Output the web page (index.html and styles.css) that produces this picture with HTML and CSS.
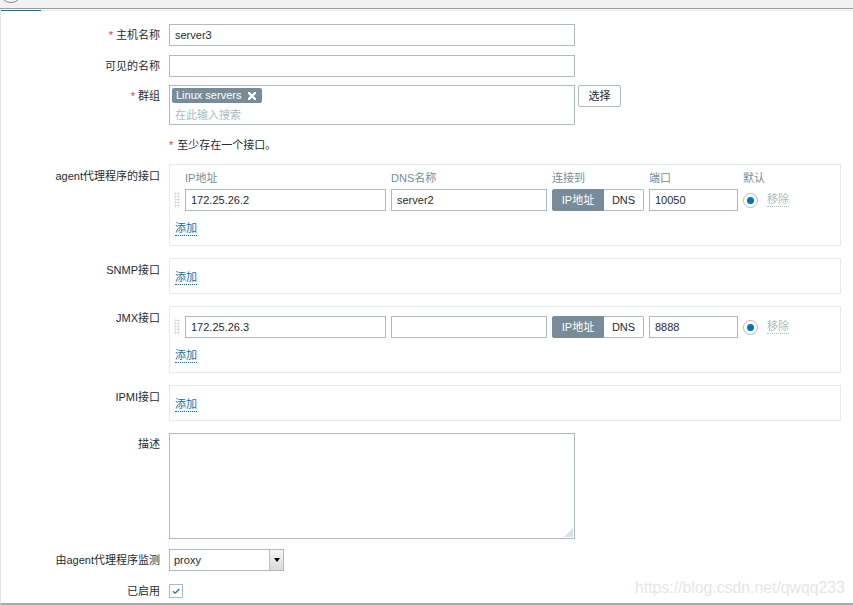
FILE: index.html
```html
<!DOCTYPE html>
<html lang="zh-CN">
<head>
<meta charset="utf-8">
<title>主机</title>
<link rel="stylesheet" href="styles.css">
</head>
<body>
<div class="topbar"><div class="avatar"></div></div>
<div class="page">
  <div class="tabs"><div class="tab-active"></div><div class="tab-rest"></div></div>
  <form class="form">
    <div class="row">
      <label class="lbl"><span class="req">*</span>主机名称</label>
      <div class="field"><input class="input" type="text" value="server3"></div>
    </div>
    <div class="row mb8">
      <label class="lbl">可见的名称</label>
      <div class="field"><input class="input" type="text" value=""></div>
    </div>
    <div class="row mb10">
      <label class="lbl"><span class="req">*</span>群组</label>
      <div class="field ms-row">
        <div class="ms">
          <span class="chip">Linux servers<svg viewBox="0 0 8 8"><path d="M1 1L7 7M7 1L1 7" stroke="#fff" stroke-width="2.3" stroke-linecap="square"/></svg></span>
          <div class="ms-ph">在此输入搜索</div>
        </div>
        <button type="button" class="btn">选择</button>
      </div>
    </div>
    <div class="row mb11">
      <div class="lbl"></div>
      <div class="field msg"><span class="req">*</span>至少存在一个接口。</div>
    </div>

    <div class="row mb12">
      <label class="lbl lbl-box">agent代理程序的接口</label>
      <div class="field">
        <div class="iface">
          <div class="if-grid if-head">
            <span></span><span>IP地址</span><span>DNS名称</span><span>连接到</span><span>端口</span><span>默认</span>
          </div>
          <div class="if-grid if-row">
            <span class="handle"></span>
            <input class="input fill" type="text" value="172.25.26.2">
            <input class="input fill" type="text" value="server2">
            <div class="toggle"><span class="tg-on">IP地址</span><span class="tg-off">DNS</span></div>
            <input class="input fill" type="text" value="10050">
            <div class="def"><span class="radio"></span><span class="rm">移除</span></div>
          </div>
          <div class="add-line"><a class="add">添加</a></div>
        </div>
      </div>
    </div>

    <div class="row mb12">
      <label class="lbl lbl-box">SNMP接口</label>
      <div class="field">
        <div class="iface empty">
          <div class="add-line"><a class="add">添加</a></div>
        </div>
      </div>
    </div>

    <div class="row mb12">
      <label class="lbl lbl-box">JMX接口</label>
      <div class="field">
        <div class="iface no-head">
          <div class="if-grid if-row">
            <span class="handle"></span>
            <input class="input fill" type="text" value="172.25.26.3">
            <input class="input fill" type="text" value="">
            <div class="toggle"><span class="tg-on">IP地址</span><span class="tg-off">DNS</span></div>
            <input class="input fill" type="text" value="8888">
            <div class="def"><span class="radio"></span><span class="rm">移除</span></div>
          </div>
          <div class="add-line"><a class="add">添加</a></div>
        </div>
      </div>
    </div>

    <div class="row mb12">
      <label class="lbl lbl-box">IPMI接口</label>
      <div class="field">
        <div class="iface empty">
          <div class="add-line"><a class="add">添加</a></div>
        </div>
      </div>
    </div>

    <div class="row mb10">
      <label class="lbl">描述</label>
      <div class="field"><div class="ta-wrap"><textarea class="textarea"></textarea></div></div>
    </div>

    <div class="row">
      <label class="lbl">由agent代理程序监测</label>
      <div class="field">
        <div class="select"><span class="select-val">proxy</span><span class="select-arrow"><span class="tri"></span></span></div>
      </div>
    </div>

    <div class="row">
      <label class="lbl">已启用</label>
      <div class="field">
        <span class="checkbox"><svg viewBox="0 0 12 12"><path d="M3 6.2L5.2 8.2L9.3 4" fill="none" stroke="#0275b8" stroke-width="1.2"/></svg></span>
      </div>
    </div>
  </form>
  <div class="watermark">https://blog.csdn.net/qwqq233</div>
</div>
</body>
</html>
```
FILE: styles.css
```css
* { box-sizing: border-box; }
html, body { margin: 0; height: 605px; overflow: hidden; }
body {
  font: 11px/18px "Liberation Sans", "Noto Sans CJK SC", sans-serif;
  color: #1f2c33;
  background: #fff;
}

.topbar {
  height: 9px;
  background: #f2f2f2;
  border-bottom: 1px solid #9c9c9c;
  overflow: hidden;
}
.avatar {
  width: 24px;
  height: 24px;
  margin: -21px 0 0 -1px;
  border: 1px solid #8a8a8a;
  border-radius: 50%;
  background: #f7f7f7;
}

.page {
  position: relative;
  height: 596px;
  border-left: 1px solid #dfe4e7;
  border-bottom: 2px solid #a8a8a8;
}

.tabs { display: flex; padding-top: 1px; }
.tab-active { width: 40px; height: 1px; background: #0275b8; }
.tab-rest { flex: 1; height: 1px; background: #e8e8e8; }

.form { padding-top: 13px; }

.row {
  display: grid;
  grid-template-columns: 159px 1fr;
  column-gap: 9px;
  margin-bottom: 9px;
}
.mb8 { margin-bottom: 8px; }
.mb10 { margin-bottom: 10px; }
.mb11 { margin-bottom: 11px; }
.mb12 { margin-bottom: 12px; }

.lbl {
  text-align: right;
  padding-top: 2px;
  line-height: 18px;
  white-space: nowrap;
}
.lbl-box { padding-top: 3px; }
.req { color: #e33734; margin-right: 3px; }

.input {
  display: block;
  width: 406px;
  height: 22px;
  margin: 0;
  padding: 0 5px;
  border: 1px solid #acbbc2;
  border-radius: 0;
  background: #fff;
  font: inherit;
  color: #1f2c33;
  outline: none;
}
.input.fill { width: 100%; }

.ms-row { display: flex; align-items: flex-start; gap: 3px; }
.ms {
  width: 406px;
  height: 40px;
  border: 1px solid #acbbc2;
  padding: 2px;
}
.chip {
  display: inline-flex;
  align-items: center;
  gap: 7px;
  height: 15px;
  padding: 0 6px 0 4px;
  border-radius: 2px;
  background: #768d99;
  color: #fff;
  line-height: 15px;
  vertical-align: top;
}
.chip svg { width: 8px; height: 8px; display: block; }
.ms-ph { color: #acbbc2; padding-left: 3px; margin-top: 0; line-height: 18px; }

.btn {
  width: 43px;
  height: 22px;
  padding: 0;
  border: 1px solid #acbbc2;
  border-radius: 2px;
  background: #fff;
  font: inherit;
  color: #1f2c33;
}

.msg { line-height: 18px; height: 18px; padding-top: 1px; }
.msg .req { margin-right: 4px; }

.iface {
  width: 672px;
  border: 1px solid #e6eaec;
  padding: 4px 4px 8px;
}
.iface.no-head { padding-top: 9px; }
.iface.empty { padding: 9px 4px 7px; }

.if-grid {
  display: grid;
  grid-template-columns: 6px 201px 156px 92px 89px auto;
  column-gap: 5px;
}
.if-head { color: #768d99; line-height: 18px; margin-bottom: 2px; }
.if-row { height: 22px; margin-bottom: 8px; align-items: start; }

.handle {
  width: 6px;
  height: 16px;
  margin-top: 3px;
  background: radial-gradient(circle, #d5dce0 45%, transparent 55%) 0 0 / 3px 3px;
}

.toggle { display: flex; height: 22px; }
.toggle span { display: flex; align-items: center; justify-content: center; }
.tg-on {
  width: 52px;
  background: #768d99;
  color: #fff;
  border: 1px solid #768d99;
  border-radius: 2px 0 0 2px;
}
.tg-off {
  width: 40px;
  border: 1px solid #acbbc2;
  border-left: 0;
  border-radius: 0 2px 2px 0;
}

.def { display: flex; align-items: center; gap: 9px; height: 22px; }
.radio {
  width: 15px;
  height: 15px;
  border: 1px solid #acbbc2;
  border-radius: 50%;
  display: flex;
  align-items: center;
  justify-content: center;
}
.radio::after {
  content: "";
  width: 7px;
  height: 7px;
  border-radius: 50%;
  background: #0275b8;
}
.rm {
  color: #acbbc2;
  line-height: 13px;
  border-bottom: 1px dotted #acbbc2;
}

.add-line { height: 18px; display: flex; align-items: center; }
.add {
  margin-left: 1px;
  color: #0275b8;
  line-height: 14px;
  border-bottom: 1px dotted #0275b8;
  cursor: pointer;
}

.ta-wrap { position: relative; width: 406px; height: 106px; }
.ta-wrap::after {
  content: "";
  position: absolute;
  right: 2px;
  bottom: 2px;
  width: 9px;
  height: 9px;
  background: radial-gradient(circle, #b9c4ca 45%, transparent 55%) 0 0 / 2px 2px;
  clip-path: polygon(100% 0, 100% 100%, 0 100%);
  pointer-events: none;
}
.textarea {
  display: block;
  width: 406px;
  height: 106px;
  margin: 0;
  border: 1px solid #acbbc2;
  border-radius: 0;
  font: inherit;
  outline: none;
  resize: none;
}

.select {
  display: flex;
  width: 115px;
  height: 22px;
  border: 1px solid #acbbc2;
  background: #fff;
}
.select-val { flex: 1; padding-left: 4px; line-height: 20px; }
.select-arrow {
  width: 14px;
  display: flex;
  align-items: center;
  justify-content: center;
  background: linear-gradient(#f6f6f6, #dadada);
  border-left: 1px solid #bdbdbd;
}
.tri {
  width: 0;
  height: 0;
  border-left: 3px solid transparent;
  border-right: 3px solid transparent;
  border-top: 4px solid #000;
}

.checkbox {
  display: block;
  width: 14px;
  height: 14px;
  margin-top: 4px;
  border: 1px solid #acbbc2;
  background: #fff;
}
.checkbox svg { display: block; width: 12px; height: 12px; }

.watermark {
  position: absolute;
  left: 634px;
  top: 569px;
  font: 15.8px/20px "Liberation Sans", sans-serif;
  color: #e6e6e6;
  white-space: nowrap;
}
```
